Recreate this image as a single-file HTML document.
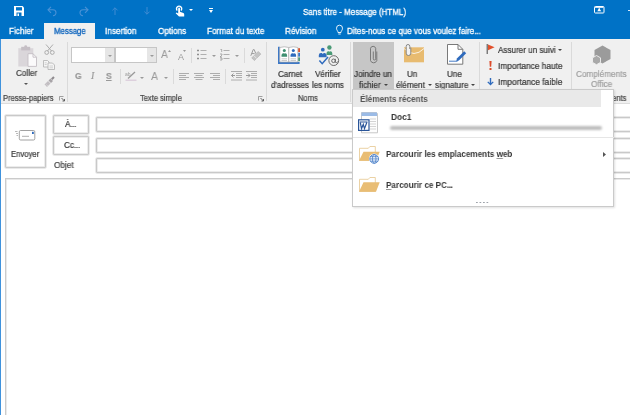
<!DOCTYPE html>
<html><head><meta charset="utf-8">
<style>
*{margin:0;padding:0;box-sizing:border-box}
html,body{width:630px;height:415px;overflow:hidden;background:#fff}
body{position:relative;font-family:"Liberation Sans",sans-serif;color:#444}
.a{position:absolute}
.t{position:absolute;white-space:nowrap;font-size:8.86px;line-height:10px;will-change:transform;transform:scaleX(0.926);transform-origin:0 0;-webkit-text-stroke:0.22px currentColor}
.w{color:#fff;-webkit-text-stroke:0.3px #fff !important}
.sep{position:absolute;width:1px;background:#dadada}
svg{position:absolute;overflow:visible}
</style></head><body>
<!-- blue title + tabs -->
<div class="a" style="left:0;top:0;width:630px;height:39px;background:#0072c6"></div>
<div class="a" style="left:0;top:39px;width:1px;height:376px;background:#3f92dc"></div>

<!-- QAT icons -->
<svg style="left:14px;top:6px" width="10" height="10" viewBox="0 0 10 10"><path d="M0 0h8.5l1.5 1.5V10H0z" fill="#fff"/><rect x="2" y="1.2" width="6" height="3.3" fill="#0072c6"/><rect x="2.5" y="6.5" width="5" height="3.5" fill="#0072c6"/><rect x="3.5" y="7.5" width="1.5" height="2.5" fill="#fff"/></svg>
<svg style="left:46.5px;top:5.5px" width="10" height="10" viewBox="0 0 10 10"><path d="M4 0.8L1 3.8l3 3M1 3.8h5a3 3 0 0 1 0 6" fill="none" stroke="#4a92d6" stroke-width="1.1"/></svg>
<svg style="left:78.5px;top:5.5px" width="10" height="9" viewBox="0 0 10 9"><path d="M6 0.8l3 3-3 3M9 3.8H4a3 3 0 0 0 0 6" fill="none" stroke="#4a92d6" stroke-width="1.1"/></svg>
<svg style="left:112px;top:6.5px" width="6" height="8" viewBox="0 0 6 8"><path d="M3 8V0.8M0.4 3.4L3 0.8l2.6 2.6" fill="none" stroke="#3f8bd3" stroke-width="1"/></svg>
<svg style="left:144px;top:6.5px" width="6" height="8" viewBox="0 0 6 8"><path d="M3 0v7.2M0.4 4.6L3 7.2l2.6-2.6" fill="none" stroke="#3f8bd3" stroke-width="1"/></svg>
<svg style="left:174.5px;top:4.5px" width="10" height="12" viewBox="0 0 10 12"><path d="M2.3 5.6a2.6 2.6 0 1 1 3.6 0" fill="none" stroke="#fff" stroke-width="1.4"/><path d="M3.2 3.4a0.9 0.9 0 0 1 1.8 0v3.3l3.3 1.3a1.2 1.2 0 0 1 0.9 1.2V11.5H4L0.7 8.3l0.8-0.8 1.7 1z" fill="#fff"/></svg>
<svg style="left:188.6px;top:8.6px" width="4" height="2" viewBox="0 0 4 2"><path d="M0 0h4L2 2z" fill="#fff"/></svg>
<svg style="left:209px;top:7.5px" width="4" height="5" viewBox="0 0 4 5"><path d="M0 0.5h4" stroke="#fff" stroke-width="1"/><path d="M0 2h4L2 5z" fill="#fff"/></svg>
<div class="t w" style="left:303px;top:7px;font-size:8.69px">Sans titre - Message (HTML)</div>
<svg style="left:594px;top:6.4px" width="10.5" height="7.5" viewBox="0 0 10.5 7.5"><rect x="0.5" y="0.5" width="9.5" height="6.5" rx="0.8" fill="none" stroke="#fff" stroke-width="1"/><path d="M1 1h8.5v0.9H1z" fill="#dfefff"/><path d="M3.2 5.2L5.25 2.4 7.3 5.2z" fill="#fff"/><circle cx="5.25" cy="3.2" r="0.9" fill="#fff"/></svg>
<div class="a" style="left:627.5px;top:10.3px;width:7px;height:1px;background:#d8e8f8"></div>

<!-- tabs -->
<div class="t w" style="font-size:8.86px;left:9px;top:26px">Fichier</div>
<div class="a" style="left:44px;top:23px;width:51px;height:17px;background:#f0f0f0"></div>
<div class="t" style="font-size:8.45px;left:53.8px;top:26px;color:#0b63bd;-webkit-text-stroke:0.3px #0b63bd">Message</div>
<div class="t w" style="font-size:8.86px;left:105px;top:26px">Insertion</div>
<div class="t w" style="font-size:8.86px;left:158px;top:26px">Options</div>
<div class="t w" style="font-size:8.86px;left:207px;top:26px">Format du texte</div>
<div class="t w" style="font-size:8.86px;left:285px;top:26px">Révision</div>
<svg style="left:336px;top:25px" width="7" height="10" viewBox="0 0 7 10"><path d="M2 7.5C2 6 0.5 5.2 0.5 3.2a3 3 0 0 1 6 0C6.5 5.2 5 6 5 7.5zM2.3 9h2.4" fill="none" stroke="#fff" stroke-width="0.9"/></svg>
<div class="t w" style="left:347px;top:26px;font-size:8.69px">Dites-nous ce que vous voulez faire...</div>

<!-- ribbon -->
<div class="a" style="left:1px;top:39px;width:629px;height:64px;background:#f0f0f0"></div>
<div class="a" style="left:1px;top:103px;width:629px;height:1px;background:#dcdcdc"></div>


<!-- Presse-papiers -->
<svg style="left:18px;top:44.5px" width="20" height="22" viewBox="0 0 20 22">
 <path d="M0.3 3.2h15v18.3H0.3z" fill="#dad6da"/>
 <path d="M3.2 1.8h9v3.6h-9z" fill="#c5bfc5"/>
 <circle cx="7.7" cy="1.6" r="1.4" fill="#c5bfc5"/>
 <path d="M10 8.7h5l3.5 3.5v9.2H10z" fill="#fbfafb" stroke="#c4bec4" stroke-width="0.9"/>
 <path d="M15 8.7v3.5h3.5" fill="none" stroke="#c4bec4" stroke-width="0.9"/>
</svg>
<div class="t" style="left:15.5px;top:68px;font-size:8.75px;color:#444">Coller</div>
<svg style="left:24px;top:83px" width="4" height="2" viewBox="0 0 4 2"><path d="M0 0h4L2 2z" fill="#555"/></svg>
<svg style="left:44px;top:44px" width="11" height="11" viewBox="0 0 11 11"><path d="M2 0.5L7.5 7M9 0.5L3.5 7" stroke="#a5a5a5" stroke-width="0.9" fill="none"/><circle cx="2.7" cy="8.5" r="1.9" fill="none" stroke="#a5a5a5" stroke-width="0.9"/><circle cx="8.3" cy="8.5" r="1.9" fill="none" stroke="#a5a5a5" stroke-width="0.9"/></svg>
<svg style="left:43px;top:60px" width="12" height="10" viewBox="0 0 12 10"><path d="M0.5 0.5h4l1.5 1.5v5H0.5z" fill="#f5f5f5" stroke="#b0b0b0" stroke-width="0.8"/><path d="M5 3h4.5l2 2v4.5H5z" fill="#f5f5f5" stroke="#b0b0b0" stroke-width="0.8"/><path d="M6.5 6h3.5M6.5 7.8h3.5M1.7 2.8h2M1.7 4.5h2" stroke="#b8b8b8" stroke-width="0.6"/></svg>
<svg style="left:44px;top:76px" width="11" height="11" viewBox="0 0 11 11"><path d="M0.5 8.5L4 5l2.5 2.5L3 11z" fill="#c2bec2"/><path d="M1.5 9.5l1-1M2.7 10.2l1-1" stroke="#f0f0f0" stroke-width="0.5"/><path d="M4.5 4.5l2-2 2.5 2.5-2 2z" fill="#a8a4a8"/><path d="M7 2.5L9.3 0.3l1.4 1.4L8.5 4z" fill="#8f8b8f"/></svg>
<div class="t" style="left:3px;top:94px;font-size:8.15px;color:#444">Presse-papiers</div>
<svg style="left:59px;top:96px" width="6" height="5" viewBox="0 0 6 5"><path d="M0.5 4.5v-4h4" fill="none" stroke="#8a8a8a" stroke-width="0.8"/><path d="M2.5 2l3 3M3.5 5h2v-2" fill="none" stroke="#555" stroke-width="0.9"/></svg>
<div class="sep" style="left:67px;top:42px;height:60px"></div>

<!-- Texte simple -->
<div class="a" style="left:71px;top:47px;width:44px;height:16px;background:#fff;border:1px solid #c6c6c6"></div>
<div class="a" style="left:105px;top:48px;width:9px;height:14px;background:#e6e6e6"></div>
<svg style="left:108px;top:55px" width="4" height="2" viewBox="0 0 4 2"><path d="M0 0h4L2 2z" fill="#9a9a9a"/></svg>
<div class="a" style="left:115px;top:47px;width:42px;height:16px;background:#fff;border:1px solid #c6c6c6"></div>
<div class="a" style="left:147px;top:48px;width:9px;height:14px;background:#e6e6e6"></div>
<svg style="left:149.5px;top:55px" width="4" height="2" viewBox="0 0 4 2"><path d="M0 0h4L2 2z" fill="#9a9a9a"/></svg>
<div class="t" style="left:161.3px;top:49.17px;font-size:11.12px;color:#9a9a9a;-webkit-text-stroke:0">A</div>
<svg style="left:167.5px;top:50px" width="3" height="2" viewBox="0 0 3 2"><path d="M0 2L1.5 0 3 2z" fill="#9a9a9a"/></svg>
<div class="t" style="left:177.5px;top:51.55px;font-size:8.96px;color:#9a9a9a;-webkit-text-stroke:0">A</div>
<svg style="left:183px;top:50px" width="3" height="2" viewBox="0 0 3 2"><path d="M0 0h3L1.5 2z" fill="#9a9a9a"/></svg>
<div class="sep" style="left:191px;top:48px;height:15px"></div>
<svg style="left:197px;top:49px" width="10" height="11" viewBox="0 0 10 11"><path d="M0 1.5h2M0 5.5h2M0 9.5h2" stroke="#8f8f8f" stroke-width="1.4"/><path d="M3.5 1.5h6M3.5 5.5h6M3.5 9.5h6" stroke="#a8a8a8" stroke-width="0.9"/></svg>
<svg style="left:211.5px;top:55px" width="4" height="2" viewBox="0 0 4 2"><path d="M0 0h4L2 2z" fill="#9a9a9a"/></svg>
<svg style="left:220px;top:49px" width="10" height="11" viewBox="0 0 10 11"><path d="M0.5 0.5h1.2v2.5M0 5h2v1L0 8h2M0 9h2v2H0" stroke="#8f8f8f" stroke-width="0.7" fill="none"/><path d="M3.5 1.5h6M3.5 5.5h6M3.5 9.5h6" stroke="#a8a8a8" stroke-width="0.9"/></svg>
<svg style="left:235px;top:55px" width="4" height="2" viewBox="0 0 4 2"><path d="M0 0h4L2 2z" fill="#9a9a9a"/></svg>
<div class="sep" style="left:244px;top:48px;height:15px"></div>
<svg style="left:250px;top:49px" width="12" height="12" viewBox="0 0 12 12">
 <path d="M0.8 6.8L3.2 0.6h1l1.8 4.6M1.8 4.6h2.8" fill="none" stroke="#9a9a9a" stroke-width="1"/>
 <g transform="translate(6.3 7) rotate(-45)"><rect x="-5" y="-2.3" width="10" height="4.6" fill="#f0f0f0"/><rect x="-4.6" y="-1.9" width="9.2" height="3.8" fill="#c4c4c4" stroke="#a8a8a8" stroke-width="0.5"/><path d="M-1.5 -2v4" stroke="#f0f0f0" stroke-width="0.7"/></g>
</svg>

<div class="t" style="left:75px;top:71.00px;font-size:9.18px;font-weight:bold;color:#999">G</div>
<div class="t" style="left:91px;top:70.94px;font-size:10.26px;font-style:italic;font-family:'Liberation Serif';color:#999">I</div>
<div class="t" style="left:106px;top:70.79px;font-size:9.18px;font-weight:bold;text-decoration:underline;color:#999">S</div>
<div class="sep" style="left:120px;top:69px;height:15px"></div>
<svg style="left:125px;top:71px" width="12" height="10" viewBox="0 0 12 10"><text x="0" y="5" font-size="5" fill="#999" font-family="Liberation Sans">ab</text><path d="M3 7.5L10 1" stroke="#999" stroke-width="1.3"/><path d="M0.5 9.2h11" stroke="#d9c8d9" stroke-width="1.2"/></svg>
<svg style="left:140px;top:77px" width="4" height="2" viewBox="0 0 4 2"><path d="M0 0h4L2 2z" fill="#9a9a9a"/></svg>
<div class="t" style="left:151px;top:70.50px;font-size:11.34px;color:#9a9a9a;-webkit-text-stroke:0">A</div>
<svg style="left:163.5px;top:77px" width="4" height="2" viewBox="0 0 4 2"><path d="M0 0h4L2 2z" fill="#9a9a9a"/></svg>
<div class="sep" style="left:173px;top:69px;height:15px"></div>
<svg style="left:179px;top:73px" width="10" height="7" viewBox="0 0 10 7"><path d="M0 0.5h10M0 2.5h7M0 4.5h10M0 6.5h7" stroke="#a5a5a5" stroke-width="0.9"/></svg>
<svg style="left:194px;top:73px" width="10" height="7" viewBox="0 0 10 7"><path d="M0 0.5h10M1.5 2.5h7M0 4.5h10M1.5 6.5h7" stroke="#a5a5a5" stroke-width="0.9"/></svg>
<svg style="left:210px;top:73px" width="10" height="7" viewBox="0 0 10 7"><path d="M0 0.5h10M3 2.5h7M0 4.5h10M3 6.5h7" stroke="#a5a5a5" stroke-width="0.9"/></svg>
<div class="sep" style="left:225px;top:69px;height:15px"></div>
<svg style="left:231px;top:71px" width="11" height="10" viewBox="0 0 11 10"><path d="M0 0.5h11M5 2.5h6M5 4.5h6M5 6.5h6M0 9h11" stroke="#a5a5a5" stroke-width="0.9"/><path d="M4 4.5H0.5M2.5 2.5l-2 2 2 2" stroke="#8f8f8f" stroke-width="0.9" fill="none"/></svg>
<svg style="left:246px;top:71px" width="11" height="10" viewBox="0 0 11 10"><path d="M0 0.5h11M5 2.5h6M5 4.5h6M5 6.5h6M0 9h11" stroke="#a5a5a5" stroke-width="0.9"/><path d="M0 4.5h4M2 2.5l2 2-2 2" stroke="#8f8f8f" stroke-width="0.9" fill="none"/></svg>
<div class="t" style="left:140px;top:94px;font-size:8.15px;color:#444">Texte simple</div>
<svg style="left:258px;top:96px" width="6" height="5" viewBox="0 0 6 5"><path d="M0.5 4.5v-4h4" fill="none" stroke="#8a8a8a" stroke-width="0.8"/><path d="M2.5 2l3 3M3.5 5h2v-2" fill="none" stroke="#555" stroke-width="0.9"/></svg>
<div class="sep" style="left:266px;top:42px;height:59px"></div>


<!-- Noms -->
<svg style="left:278px;top:45.5px" width="23" height="18.5" viewBox="0 0 23 18.5">
 <path d="M0 0.8h1.8v15.2H21.6V18H0z" fill="#3d78c6"/>
 <path d="M1.8 1.5q4.5-1.5 9 0v14.5h-9z" fill="#fff" stroke="#a8a8a8" stroke-width="0.7"/>
 <path d="M10.8 1.5q4.5-1.5 9 0v14.5h-9z" fill="#fff" stroke="#a8a8a8" stroke-width="0.7"/>
 <rect x="20.2" y="2.2" width="1.8" height="3.8" fill="#d9532c"/>
 <rect x="20.2" y="6.8" width="1.8" height="3.8" fill="#3d78c6"/>
 <rect x="20.2" y="11.4" width="1.8" height="3.8" fill="#4f9a78"/>
 <circle cx="6.3" cy="4.6" r="1.5" fill="#3e8f70"/><path d="M3.5 10.8V9.3a2 2 0 0 1 2-2h0.5l0.3 0.8 0.3-0.8h0.5a2 2 0 0 1 2 2v1.5z" fill="#3e8f70"/>
 <circle cx="15.3" cy="4.6" r="1.5" fill="#2f6bbd"/><path d="M12.5 10.8V9.3a2 2 0 0 1 2-2h0.5l0.3 0.8 0.3-0.8h0.5a2 2 0 0 1 2 2v1.5z" fill="#2f6bbd"/>
 <path d="M3.5 12.8h5.5M3.5 14.5h5.5M12.5 12.8h5.5M12.5 14.5h5.5" stroke="#b5b5b5" stroke-width="0.7"/>
</svg>
<div class="t" style="left:278px;top:69px;font-size:8.75px;color:#363636">Carnet</div>
<div class="t" style="left:270.5px;top:80px;font-size:8.53px;color:#363636">d'adresses</div>
<svg style="left:318px;top:44.5px" width="22" height="22" viewBox="0 0 22 22">
 <circle cx="11.4" cy="2.5" r="2.2" fill="#4a9a76"/>
 <path d="M8.5 10V8.3a2 2 0 0 1 2-2h0.6l0.3 0.9 0.3-0.9h0.6a2 2 0 0 1 2 2V10z" fill="#4a9a76"/>
 <circle cx="4.8" cy="4.7" r="1.9" fill="#2f6bbd"/>
 <path d="M0.8 12.2V10.3a2.2 2.2 0 0 1 2.2-2.2h0.8l1 1 1-1h0.8a2.2 2.2 0 0 1 2 2.2v1.9z" fill="#2f6bbd"/>
 <path d="M1.4 15.5l2.8 3.2 5.8-6.8" fill="none" stroke="#2f6bbd" stroke-width="1.5"/>
 <circle cx="15.75" cy="15.6" r="5.6" fill="#f0f0f0"/>
 <circle cx="15.75" cy="15.6" r="4.9" fill="none" stroke="#555" stroke-width="0.85"/>
 <circle cx="15.5" cy="15.8" r="1.8" fill="none" stroke="#555" stroke-width="0.85"/>
 <path d="M17.3 13.8v2.8a1.1 1.1 0 0 0 2.2 0" fill="none" stroke="#555" stroke-width="0.85"/>
</svg>
<div class="t" style="left:315px;top:69px;font-size:8.75px;color:#363636">Vérifier</div>
<div class="t" style="left:312px;top:80px;font-size:8.59px;color:#363636">les noms</div>
<div class="t" style="left:298px;top:94px;font-size:8.15px;color:#444">Noms</div>
<div class="sep" style="left:350px;top:42px;height:60px"></div>

<!-- Inclure -->
<div class="a" style="left:353px;top:41.7px;width:41px;height:48px;background:#c6c6c6"></div>
<svg style="left:369.5px;top:44.8px" width="8" height="20" viewBox="0 0 8 20"><path d="M6.8 6.5v9a3.3 3.3 0 0 1-6.3 0V3.3a2.7 2.7 0 0 1 5.2 0v10.5a1.2 1.2 0 0 1-2.4 0V6.5" fill="none" stroke="#747474" stroke-width="0.95"/></svg>
<div class="t" style="left:353.5px;top:69px;font-size:8.75px;color:#363636">Joindre un</div>
<div class="t" style="left:359px;top:80px;font-size:8.75px;color:#363636">fichier</div>
<svg style="left:383.5px;top:84px" width="4" height="2" viewBox="0 0 4 2"><path d="M0 0h4L2 2z" fill="#444"/></svg>
<svg style="left:403px;top:43.5px" width="21" height="19" viewBox="0 0 21 19">
 <path d="M1 3.3h20v15H1z" fill="#e8bb70"/>
 <path d="M1 4.5Q11 14.5 21 4.5" fill="none" stroke="#fff" stroke-width="0.8"/>
 <path d="M6.8 5V2.3a1.8 1.8 0 0 0-3.6 0v6.9a2.3 2.3 0 0 0 4.6 0V3.6" fill="#f2f2f2" stroke="#7d7d7d" stroke-width="0.9"/>
</svg>
<div class="t" style="left:406.5px;top:69px;font-size:8.75px;color:#363636">Un</div>
<div class="t" style="left:396px;top:80px;font-size:8.75px;color:#363636">élément</div>
<svg style="left:428px;top:84px" width="4" height="2" viewBox="0 0 4 2"><path d="M0 0h4L2 2z" fill="#444"/></svg>
<svg style="left:447px;top:44px" width="20" height="21" viewBox="0 0 20 21">
 <path d="M0.5 0.5h10.5l4.8 4.8v14.9H0.5z" fill="#fff" stroke="#6a6a6a" stroke-width="0.9"/>
 <path d="M11 0.5v4.8h4.8" fill="none" stroke="#6a6a6a" stroke-width="0.9"/>
 <path d="M9.3 17.2l0.6-2.6 7.3-7.3 2 2-7.3 7.3z" fill="#2f6bbd"/>
 <path d="M2 17.2h8.5" stroke="#2f6bbd" stroke-width="0.9"/>
</svg>
<div class="t" style="left:447px;top:69px;font-size:8.75px;color:#363636">Une</div>
<div class="t" style="left:435px;top:80px;font-size:8.75px;color:#363636">signature</div>
<svg style="left:471px;top:84px" width="4" height="2" viewBox="0 0 4 2"><path d="M0 0h4L2 2z" fill="#444"/></svg>
<div class="sep" style="left:479px;top:42px;height:60px"></div>

<!-- Indicateurs -->
<svg style="left:486px;top:44px" width="9" height="10" viewBox="0 0 9 10"><path d="M1.2 0v10" stroke="#555" stroke-width="1.1"/><path d="M2 0.6L8.6 3.3 2 6.2z" fill="#e2502b"/></svg>
<div class="t" style="left:498px;top:45px;font-size:8.75px;color:#363636">Assurer un suivi</div>
<svg style="left:557.5px;top:49px" width="4" height="2" viewBox="0 0 4 2"><path d="M0 0h4L2 2z" fill="#444"/></svg>
<svg style="left:488.8px;top:61px" width="3" height="9" viewBox="0 0 3 9"><path d="M0.4 0h2.2l-0.4 5.8H0.8z M0.5 7h2v2h-2z" fill="#dc4a2a"/></svg>
<div class="t" style="left:498px;top:61px;font-size:8.96px;color:#363636">Importance haute</div>
<svg style="left:487px;top:77.5px" width="7" height="8" viewBox="0 0 7 8"><path d="M3.5 0v6" stroke="#2f6bbd" stroke-width="1.4"/><path d="M0.3 4.2L3.5 7.6 6.7 4.2 5.8 3.4 3.5 5.6 1.2 3.4z" fill="#2f6bbd"/></svg>
<div class="t" style="left:498px;top:77px;font-size:9.07px;color:#363636">Importance faible</div>
<div class="sep" style="left:571px;top:42px;height:60px"></div>

<!-- Complements -->
<svg style="left:592px;top:45px" width="20" height="20" viewBox="0 0 20 20"><path d="M10.5 0.5l8 4.5v9l-8 4.5-8-4.5v-9z" fill="#9b9b9b"/><path d="M4.5 10.5l4 2.3v4.6l-4 2.3-4-2.3v-4.6z" fill="#a9a9a9" stroke="#f0f0f0" stroke-width="0.9"/></svg>
<div class="t" style="left:576px;top:69px;font-size:8.86px;color:#a0a0a0">Compléments</div>
<div class="t" style="left:591px;top:79px;font-size:8.86px;color:#a0a0a0">Office</div>
<div class="t" style="left:579.5px;top:94px;font-size:8.15px;color:#444">Compléments</div>


<!-- header -->
<div class="a" style="left:5px;top:115px;width:41px;height:53px;border:1px solid #c9c9c9;border-radius:1px;box-shadow:0 0 0 0.7px #e2e2e2,inset 0 0 0 0.7px #e6e6e6;background:#fff"></div>
<svg style="left:15px;top:130px" width="21" height="11" viewBox="0 0 21 11">
 <path d="M0 1.5h2.5M1 3.5h2M1.5 5.5h1.5" stroke="#888" stroke-width="0.6"/>
 <rect x="4.3" y="0.5" width="15.5" height="9.5" rx="1.3" fill="#fff" stroke="#8a8a8a" stroke-width="0.8"/>
 <path d="M7 6.3h7" stroke="#b0b0b0" stroke-width="1"/>
 <rect x="17" y="1.8" width="1.8" height="2.2" fill="#2f6bbd"/>
</svg>
<div class="t" style="left:10.7px;top:149px;font-size:8.3px;color:#3a3a3a">Envoyer</div>
<div class="a" style="left:53px;top:115px;width:36px;height:19px;border:1px solid #c9c9c9;border-radius:1px;box-shadow:0 0 0 0.7px #e2e2e2,inset 0 0 0 0.7px #e6e6e6;background:#fff"></div>
<div class="t" style="left:64.8px;top:119px;font-size:8.86px;color:#3a3a3a">À<span style="letter-spacing:-0.4px">...</span></div>
<div class="a" style="left:53px;top:136px;width:36px;height:19px;border:1px solid #c9c9c9;border-radius:1px;box-shadow:0 0 0 0.7px #e2e2e2,inset 0 0 0 0.7px #e6e6e6;background:#fff"></div>
<div class="t" style="left:63.8px;top:140px;font-size:8.86px;color:#3a3a3a">Cc<span style="letter-spacing:-0.4px">...</span></div>
<div class="t" style="left:54px;top:160px;font-size:8.86px;color:#4a4a4a">Objet</div>
<div class="a" style="left:96px;top:117px;width:540px;height:15px;border:1px solid #c9c9c9;border-radius:1px;box-shadow:0 0 0 0.7px #e2e2e2,inset 0 0 0 0.7px #e6e6e6;background:#fff"></div>
<div class="a" style="left:96px;top:138px;width:540px;height:15px;border:1px solid #c9c9c9;border-radius:1px;box-shadow:0 0 0 0.7px #e2e2e2,inset 0 0 0 0.7px #e6e6e6;background:#fff"></div>
<div class="a" style="left:96px;top:158px;width:540px;height:15px;border:1px solid #c9c9c9;border-radius:1px;box-shadow:0 0 0 0.7px #e2e2e2,inset 0 0 0 0.7px #e6e6e6;background:#fff"></div>
<div class="a" style="left:5px;top:178px;width:640px;height:300px;border:1px solid #cbcbcb;box-shadow:inset 0.7px 0.7px 0 0 #e2e2e2;background:#fff"></div>

<!-- dropdown menu -->
<div class="a" style="left:352px;top:89px;width:262px;height:118px;background:#fff;border:1px solid #cacaca;box-shadow:1px 1px 2px rgba(0,0,0,0.12)"></div>
<div class="a" style="left:353px;top:90px;width:248px;height:16.5px;background:#e9e9e9"></div>
<div class="t" style="left:360px;top:94px;font-size:8.86px;font-weight:bold;color:#555;-webkit-text-stroke:0">Éléments récents</div>
<svg style="left:358px;top:111.5px" width="21" height="22" viewBox="0 0 21 22">
 <path d="M3.5 0.5h15l1 1v19.3h-16z" fill="#fdfdfd" stroke="#c2c2c2" stroke-width="0.9"/>
 <path d="M3.5 0.5h15.5v3.5h-15.5z" fill="#9bbbe6"/>
 <path d="M12 7h6M12 9.5h6M12 12h6M12 14.5h6M12 17h6" stroke="#c8c8c8" stroke-width="0.8"/>
 <rect x="0.6" y="7.8" width="10.4" height="10.6" fill="#fff" stroke="#2a5599" stroke-width="1.2"/>
 <path d="M1.8 10h7.7" stroke="#2a5599" stroke-width="1"/>
 <path d="M2.3 10.3l1.2 6.3 1.8-4.2 1.2 4.2 2.4-6.3" fill="none" stroke="#2a5599" stroke-width="1.2"/>
</svg>
<div class="t" style="left:390.5px;top:112px;font-size:9.07px;font-weight:bold;color:#363636;-webkit-text-stroke:0">Doc1</div>
<div class="a" style="left:390px;top:125.8px;width:212px;height:4px;border-radius:2px;background:#bdbdbd;filter:blur(1.3px)"></div>
<div class="a" style="left:353px;top:137px;width:261px;height:1px;background:#e6e6e6"></div>
<svg style="left:359px;top:146px" width="22" height="20" viewBox="0 0 22 20">
 <path d="M0.5 14.5V2.3h8.8l1.6-1.8h5.4v14z" fill="#fff" stroke="#e6c68e" stroke-width="0.8"/>
 <path d="M0 14.8L4.5 5.8h16.2l-3.7 9z" fill="#e9bd74"/>
 <circle cx="15.2" cy="12.9" r="5.3" fill="#fff"/>
 <circle cx="15.2" cy="12.9" r="4.4" fill="#eef3fa" stroke="#4a7fc8" stroke-width="0.9"/>
 <ellipse cx="15.2" cy="12.9" rx="1.8" ry="4.4" fill="none" stroke="#4a7fc8" stroke-width="0.8"/>
 <path d="M10.8 12.9h8.8M11.5 10.6h7.4M11.5 15.2h7.4" stroke="#4a7fc8" stroke-width="0.7"/>
</svg>
<div class="t" style="left:385.5px;top:149px;font-size:8.77px;font-weight:bold;color:#363636;-webkit-text-stroke:0">Parcourir les emplacements <u style="text-decoration-color:#999">w</u>eb</div>
<svg style="left:603px;top:151.5px" width="3" height="5" viewBox="0 0 3 5"><path d="M0 0l3 2.5L0 5z" fill="#555"/></svg>
<svg style="left:359px;top:176px" width="22" height="17" viewBox="0 0 22 17">
 <path d="M0.5 15.5V3.3h8.8l1.6-1.8h5.4v14z" fill="#fff" stroke="#e6c68e" stroke-width="0.8"/>
 <path d="M0 15.8L4.5 6.2h16.2l-3.7 9.6z" fill="#e9bd74"/>
</svg>
<div class="t" style="left:385.5px;top:180px;font-size:8.77px;font-weight:bold;color:#363636;-webkit-text-stroke:0"><u style="text-decoration-color:#999">P</u>arcourir ce PC<span style="letter-spacing:-0.6px">...</span></div>
<div class="a" style="left:476px;top:202px;width:13px;height:1.2px;background-image:linear-gradient(90deg,#9ea3aa 1.5px,transparent 1.5px);background-size:3.5px 1.2px"></div>

</body></html>
